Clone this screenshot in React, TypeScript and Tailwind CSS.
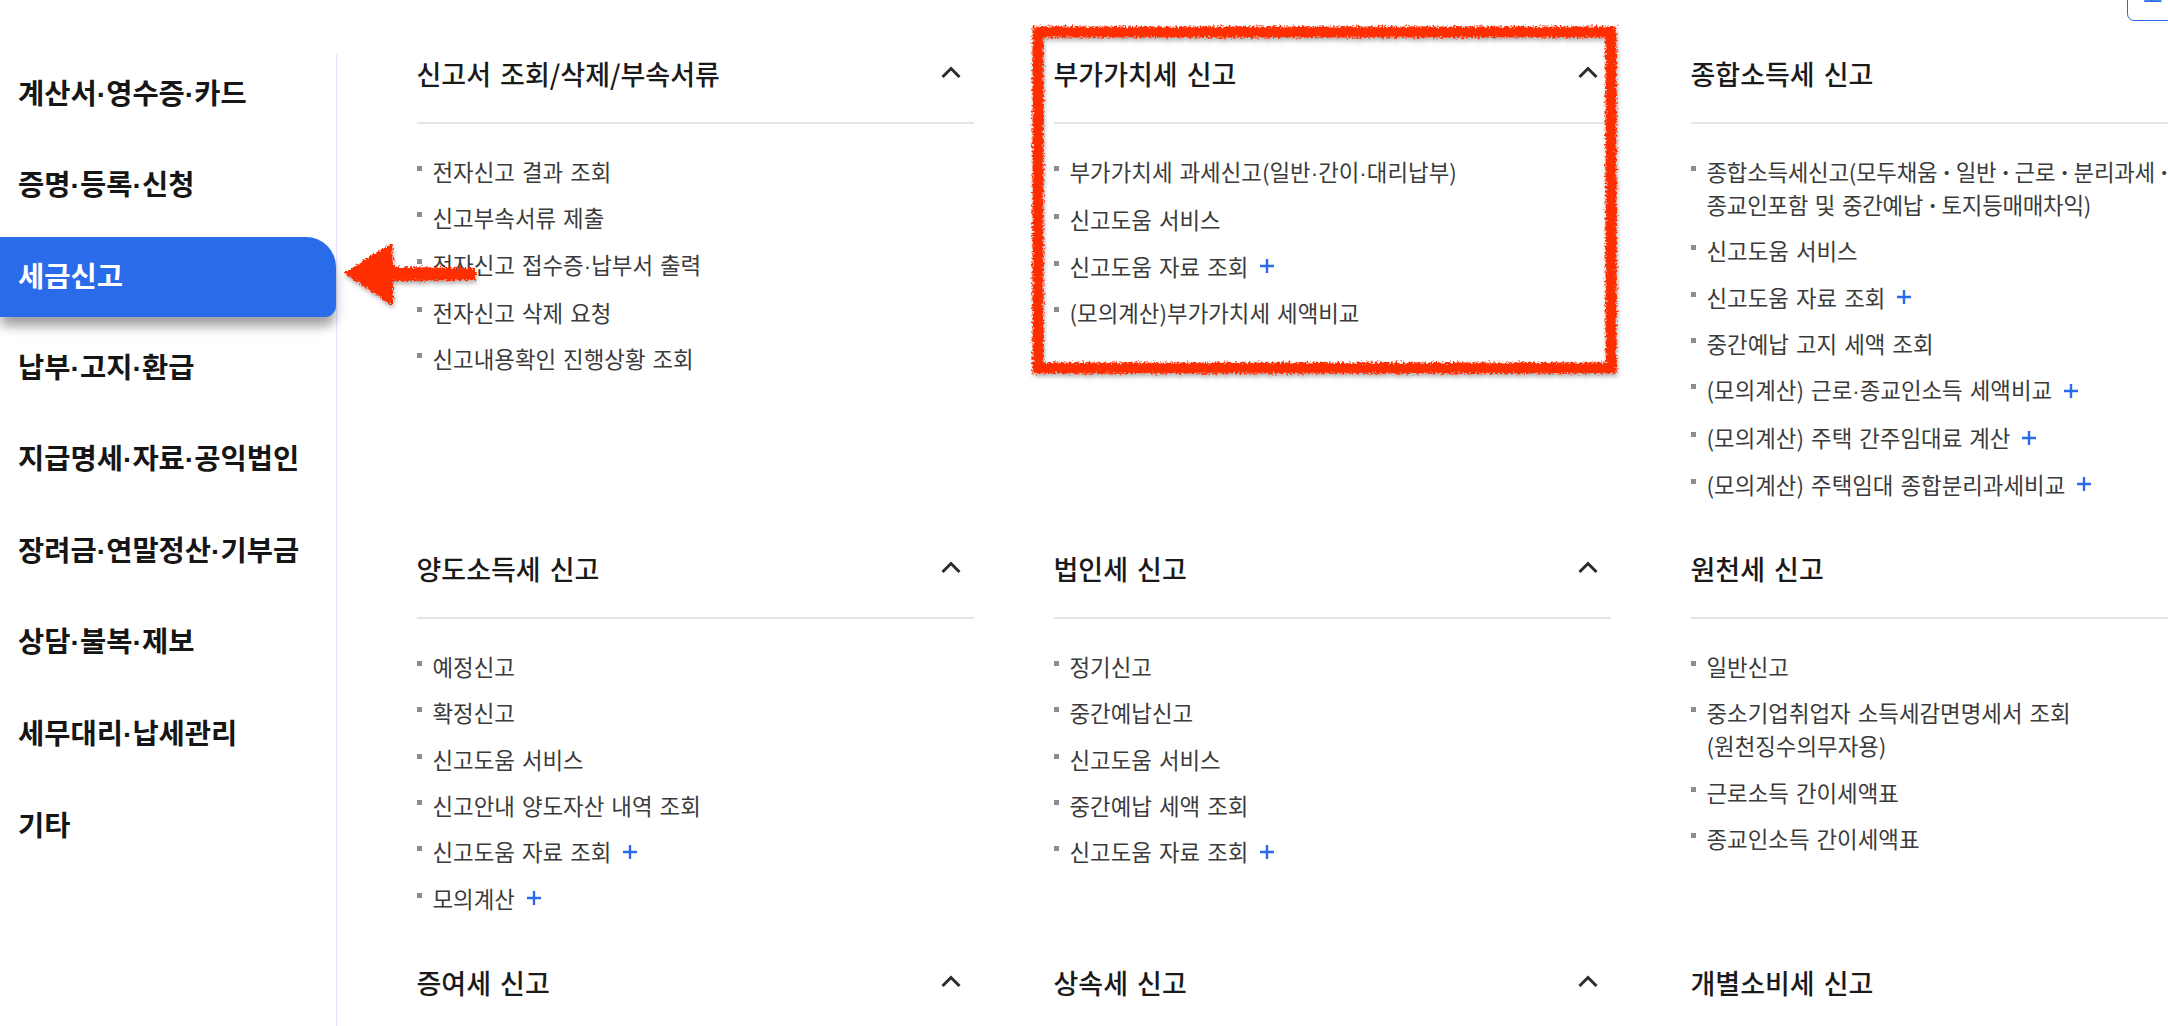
import React from "react";

const F = "font-['Noto_Sans_CJK_KR','Noto_Sans',sans-serif]";

type Item = { t: string; t2?: string; plus?: boolean; tight?: boolean };
type Sec = { title: string; chevron: boolean; items: Item[] };

const sections: Sec[] = [
  { title: "신고서 조회/삭제/부속서류", chevron: true, items: [
    { t: "전자신고 결과 조회" }, { t: "신고부속서류 제출" }, { t: "전자신고 접수증·납부서 출력" }, { t: "전자신고 삭제 요청" }, { t: "신고내용확인 진행상황 조회" } ] },
  { title: "부가가치세 신고", chevron: true, items: [
    { t: "부가가치세 과세신고(일반·간이·대리납부)" }, { t: "신고도움 서비스" }, { t: "신고도움 자료 조회", plus: true }, { t: "(모의계산)부가가치세 세액비교" } ] },
  { title: "종합소득세 신고", chevron: false, items: [
    { t: "종합소득세신고(모두채움ㆍ일반ㆍ근로ㆍ분리과세ㆍ", t2: "종교인포함 및 중간예납ㆍ토지등매매차익)", tight: true }, { t: "신고도움 서비스" }, { t: "신고도움 자료 조회", plus: true }, { t: "중간예납 고지 세액 조회" }, { t: "(모의계산) 근로·종교인소득 세액비교", plus: true }, { t: "(모의계산) 주택 간주임대료 계산", plus: true }, { t: "(모의계산) 주택임대 종합분리과세비교", plus: true } ] },
  { title: "양도소득세 신고", chevron: true, items: [
    { t: "예정신고" }, { t: "확정신고" }, { t: "신고도움 서비스" }, { t: "신고안내 양도자산 내역 조회" }, { t: "신고도움 자료 조회", plus: true }, { t: "모의계산", plus: true } ] },
  { title: "법인세 신고", chevron: true, items: [
    { t: "정기신고" }, { t: "중간예납신고" }, { t: "신고도움 서비스" }, { t: "중간예납 세액 조회" }, { t: "신고도움 자료 조회", plus: true } ] },
  { title: "원천세 신고", chevron: false, items: [
    { t: "일반신고" }, { t: "중소기업취업자 소득세감면명세서 조회", t2: "(원천징수의무자용)" }, { t: "근로소득 간이세액표" }, { t: "종교인소득 간이세액표" } ] },
  { title: "증여세 신고", chevron: true, items: [] },
  { title: "상속세 신고", chevron: true, items: [] },
  { title: "개별소비세 신고", chevron: false, items: [] },
];

const nav = ["계산서·영수증·카드", "증명·등록·신청", "세금신고", "납부·고지·환급", "지급명세·자료·공익법인", "장려금·연말정산·기부금", "상담·불복·제보", "세무대리·납세관리", "기타"];

function Dots({ s }: { s: string }) {
  const parts = s.split(/([·ㆍ])/);
  return (
    <>
      {parts.map((p, i) =>
        p === "·" ? (
          <span key={i} className="font-['Liberation_Sans',sans-serif]">·</span>
        ) : p === "ㆍ" ? (
          <span key={i} className="font-bold mx-[-1px]">ㆍ</span>
        ) : (
          <React.Fragment key={i}>{p}</React.Fragment>
        )
      )}
    </>
  );
}

function Plus() {
  return (
    <svg width="16" height="16" viewBox="0 0 16 16" className="ml-[11px] shrink-0">
      <path d="M8 1v14M1 8h14" stroke="#2a6bea" strokeWidth="2.4" fill="none" />
    </svg>
  );
}

function Chevron() {
  return (
    <svg width="20" height="13" viewBox="0 0 20 13" className="shrink-0 mt-[12px]">
      <path d="M1.5 11L10 2.5 18.5 11" stroke="#2b2b2b" strokeWidth="3" fill="none" />
    </svg>
  );
}

function Section({ s }: { s: Sec }) {
  return (
    <section className="w-[557px] mb-[19px]">
      <div className="flex items-start justify-between h-[86px] pt-[16px] border-b-2 border-[#e4e4e4] pr-[13px]">
        <h3 className="text-[27px] font-medium text-[#1a1a1a] leading-[40px] [word-spacing:3px]">{s.title}</h3>
        {s.chevron && <Chevron />}
      </div>
      {s.items.length > 0 && (
        <ul className="pt-[31px]">
          {s.items.map((it, i) => (
            <li key={i} className="flex mb-[13.3px] text-[22.4px] leading-[33px] text-[#3b3b3b]">
              <span className="w-[5px] h-[5px] bg-[#8c8c8c] mt-[11px] mr-[11px] shrink-0" />
              <div className={`whitespace-nowrap [word-spacing:2px] ${it.tight ? "tracking-[-0.28px]" : ""}`}>
                <div className="flex items-center">
                  <span><Dots s={it.t} /></span>
                  {it.plus && <Plus />}
                </div>
                {it.t2 && <div><Dots s={it.t2} /></div>}
              </div>
            </li>
          ))}
        </ul>
      )}
    </section>
  );
}

export default function App() {
  return (
    <div className={`relative w-[2168px] h-[1026px] overflow-hidden bg-white ${F}`}>
      <div className="absolute left-[2127px] top-[-30px] w-[101px] h-[50.5px] border-[1.5px] border-[#2a6bea] rounded-[7px] bg-white overflow-hidden">
        <span className="absolute left-[15px] top-[7px] text-[21px] leading-[30px] text-[#2a6bea] font-medium">고</span>
      </div>
      <div className="flex h-full">
        <aside className="w-[337px] shrink-0 mt-[54px] border-r border-[#e4e4fb] flex flex-col gap-[11.5px]">
          {nav.map((n, i) => (
            <div key={n} className={`h-[80px] shrink-0 flex items-center pb-[2px] pl-[18px] text-[28.5px] font-bold whitespace-nowrap ${i === 2 ? "mt-[-0.5px] bg-[#2a6bea] text-white rounded-tr-[30px] rounded-br-[11px] shadow-[0_10px_12px_-1px_rgba(0,0,0,0.38)]" : "text-[#161616]"}`}><span><Dots s={n} /></span></div>
          ))}
        </aside>
        <main className="ml-[79.5px] pt-[38px] grid grid-cols-[557px_557px_557px] gap-x-[80px] content-start">
          {sections.map((s) => <Section key={s.title} s={s} />)}
        </main>
      </div>
      <svg className="absolute inset-0 pointer-events-none" width="2168" height="1026">
        <defs>
          <filter id="rough" x="-5%" y="-5%" width="110%" height="110%">
            <feTurbulence type="fractalNoise" baseFrequency="0.45" numOctaves="3" seed="7" result="n" />
            <feDisplacementMap in="SourceGraphic" in2="n" scale="7" xChannelSelector="R" yChannelSelector="G" result="d" />
            <feDropShadow in="d" dx="1" dy="3" stdDeviation="2" floodColor="#000" floodOpacity="0.3" />
          </filter>
        </defs>
        <rect x="1038" y="32" width="573" height="336" fill="none" stroke="#ff2d00" strokeWidth="11" filter="url(#rough)" />
        <path d="M344 273 L392 243 L393 267 L476 268 L476 280 L393 281 L393 306 Z" fill="#ff2d00" filter="url(#rough)" />
      </svg>
    </div>
  );
}
